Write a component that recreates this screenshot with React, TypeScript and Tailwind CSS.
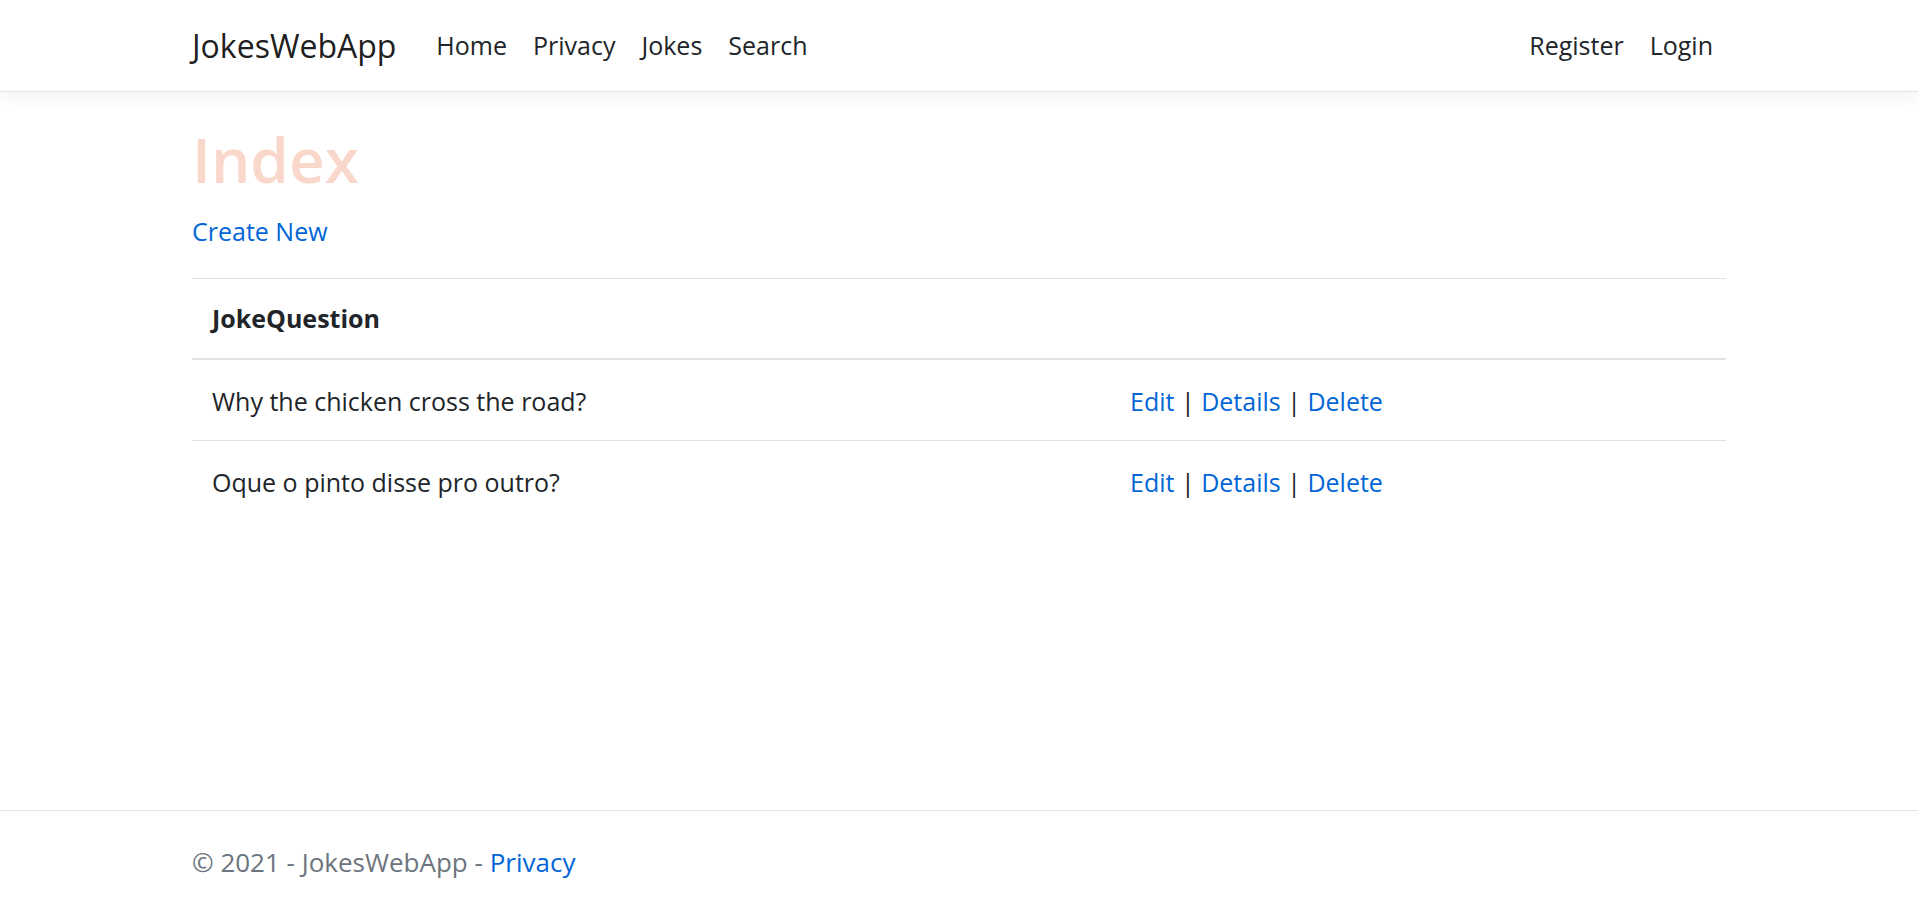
import React from 'react'

const jokes = [
  { id: 1, question: 'Why the chicken cross the road?' },
  { id: 2, question: 'Oque o pinto disse pro outro?' },
]

function NavBar() {
  return (
    <header className="mb-[16px]">
      <nav className="h-[92px] bg-white border-b border-[#e5e5e5] shadow-[0_6px_18px_rgba(0,0,0,0.05)]">
        <div className="w-[1534px] mx-auto h-full flex items-center">
          <a href="#" className="text-[32px] leading-[1.5] text-[rgba(0,0,0,0.9)] mr-[27px]">
            JokesWebApp
          </a>
          <ul className="flex items-center">
            {['Home', 'Privacy', 'Jokes', 'Search'].map((item) => (
              <li key={item}>
                <a href="#" className="block px-[13px] text-[25px] leading-[1.5] text-[#212529]">
                  {item}
                </a>
              </li>
            ))}
          </ul>
          <ul className="flex items-center ml-auto">
            {['Register', 'Login'].map((item) => (
              <li key={item}>
                <a href="#" className="block px-[13px] text-[25px] leading-[1.5] text-[#212529]">
                  {item}
                </a>
              </li>
            ))}
          </ul>
        </div>
      </nav>
    </header>
  )
}

export default function App() {
  return (
    <div
      className="min-h-screen flex flex-col bg-white text-[#212529] text-[25px] leading-[39.6px]"
      style={{ fontFamily: '"Open Sans", "Noto Sans", sans-serif' }}
    >
      <NavBar />

      <main className="w-[1534px] mx-auto pb-[50px]">
        <h1 className="text-[62px] leading-[79px] font-semibold text-[#f9d8cb] mb-[13px] pt-[12px]">Index</h1>

        <p className="mb-[26px]">
          <a href="#" className="text-[#0366d6]">Create New</a>
        </p>

        <table className="w-full border-collapse">
          <thead>
            <tr>
              <th className="w-[918px] text-left font-bold px-[20px] py-[20px] border-t border-b-2 border-[#dee2e6]">
                JokeQuestion
              </th>
              <th className="px-[20px] py-[20px] border-t border-b-2 border-[#dee2e6]"></th>
            </tr>
          </thead>
          <tbody>
            {jokes.map((joke) => (
              <tr key={joke.id}>
                <td className="px-[20px] pt-[22px] pb-[18px] border-t border-[#dee2e6]">{joke.question}</td>
                <td className="px-[20px] pt-[22px] pb-[18px] border-t border-[#dee2e6]">
                  <a href="#" className="text-[#0366d6]">Edit</a> |{' '}
                  <a href="#" className="text-[#0366d6]">Details</a> |{' '}
                  <a href="#" className="text-[#0366d6]">Delete</a>
                </td>
              </tr>
            ))}
          </tbody>
        </table>
      </main>

      <footer className="mt-auto border-t border-[#e5e5e5] text-[#6c757d] text-[26px] whitespace-nowrap">
        <div className="w-[1534px] mx-auto pt-[4px] leading-[95px]">
          © 2021 - JokesWebApp - <a href="#" className="text-[#0366d6]">Privacy</a>
        </div>
      </footer>
    </div>
  )
}
